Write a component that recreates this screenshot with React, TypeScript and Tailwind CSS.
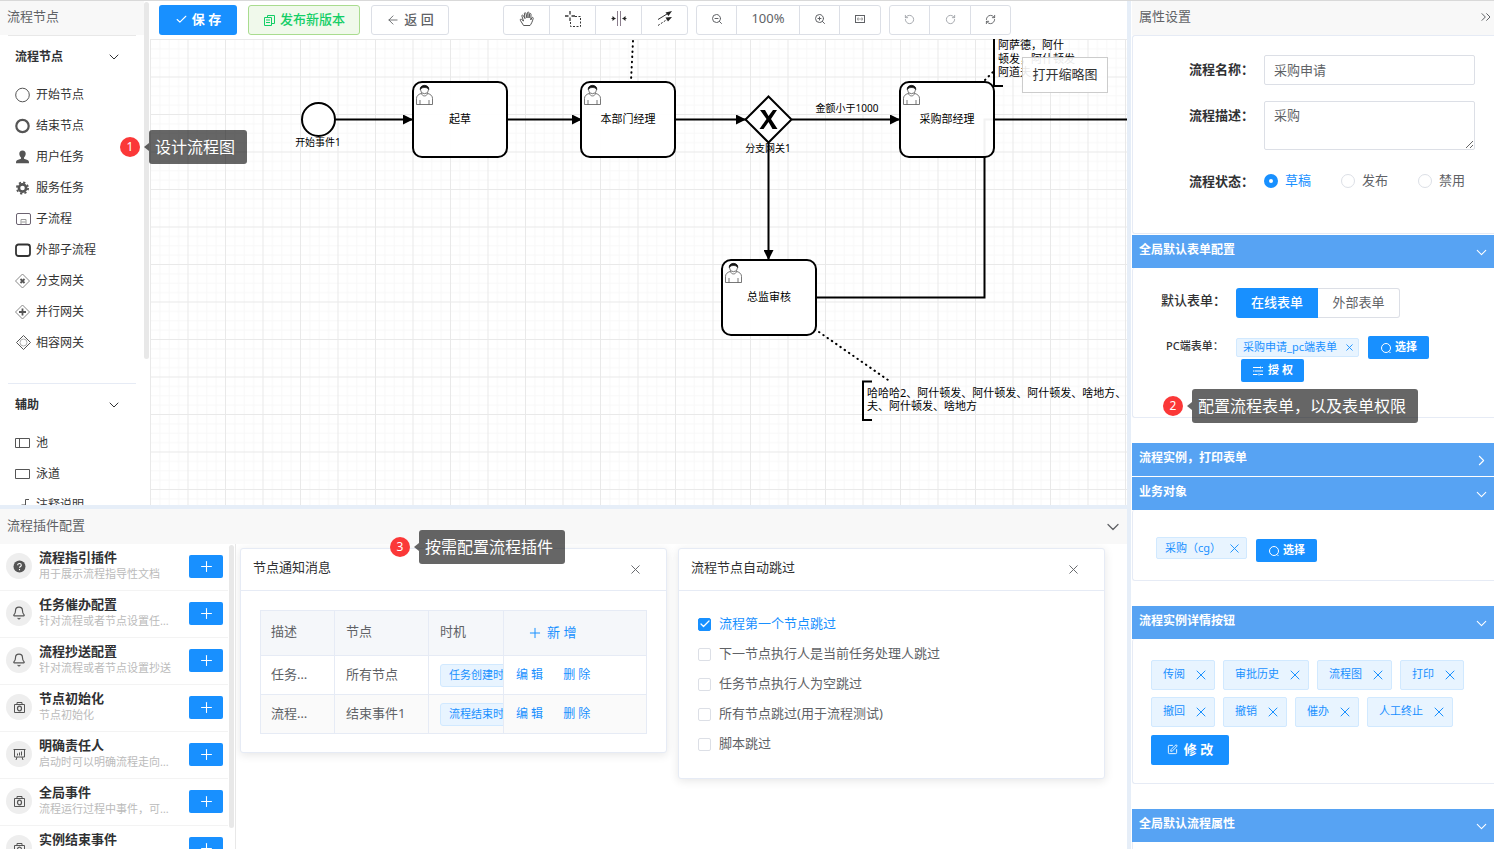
import React from 'react';
import { ArrowLeft, Bell, Check, ChevronDown, ChevronRight, ChevronsRight, Plus, RotateCcw, RotateCw, RefreshCw, X, ZoomIn, ZoomOut, SquarePen } from 'lucide-react';

/* ---------- icons ---------- */

const PaletteIcon = ({ name }: { name: string }) => (
  <svg width="16" height="16" viewBox="0 0 16 16" fill="none" stroke="#555" className="shrink-0">
    {name === 'start' && <circle cx="7.500" cy="8" r="6.800" />}
    {name === 'end' && <circle cx="7.500" cy="8" r="6.200" strokeWidth="2.200" />}
    {name === 'user' && (
      <path d="M7.500 1.500c-2.200 0-3.200 1.400-3.200 3.100 0 1.700.7 3.100 1.700 3.900v1.200L2.500 11C1.300 11.400 1 12.300 1 14.200h13c0-1.900-.3-2.800-1.500-3.200L9 9.700V8.500c1-.8 1.700-2.200 1.700-3.900 0-1.700-1-3.100-3.200-3.100z" fill="#555" stroke="none" />
    )}
    {name === 'service' && (
      <>
        <circle cx="7.500" cy="8" r="3.600" strokeWidth="2.600" />
        <circle cx="7.500" cy="8" r="5.600" strokeWidth="1.800" strokeDasharray="2.200 2.198" />
      </>
    )}
    {name === 'sub' && (
      <>
        <rect x="1.500" y="2.500" width="14" height="11" rx="1.500" stroke="#6b6270" />
        <path d="M6 13V8.500h5V13M6.500 11h4" stroke="#999" />
      </>
    )}
    {name === 'call' && <rect x="1" y="2.500" width="14" height="11.500" rx="2.500" stroke="#333" strokeWidth="1.800" />}
    {name === 'exclusive' && <path d="M7.500 1l7 7-7 7-7-7z" stroke="#888" />}
    {name === 'exclusive' && <path d="M5.500 6l4 4M9.500 6l-4 4" strokeWidth="1.800" />}
    {name === 'parallel' && <path d="M7.500 1l7 7-7 7-7-7z" stroke="#888" />}
    {name === 'parallel' && <path d="M7.500 4.500v7M4 8h7" strokeWidth="1.800" />}
    {name === 'inclusive' && (
      <>
        <path d="M8.500 .5l7 7-7 7-7-7z" stroke="#555" />
        <circle cx="8.500" cy="7.500" r="3.500" stroke="#999" strokeWidth=".8" />
      </>
    )}
    {name === 'pool' && <path d="M.5 3.500h14v9H.5zM4.500 3.500v9" />}
    {name === 'lane' && <path d="M.5 3.500h14v9H.5z" />}
    {name === 'note' && <path d="M14 2.500h-3.500v10H14M5 9.500l1.500-1.500h4M5.500 13l1-1.500" />}
  </svg>
);

const HandIcon = () => (
  <svg width="16" height="16" viewBox="0 0 16 16" fill="none" stroke="#444" strokeLinecap="round" strokeLinejoin="round">
    <path d="M5 14.500h6c1.200-1.500 2.300-3.600 3.200-7 .3-1.200-1-1.500-1.400-.6l-1 2 .2-5.600c0-1-1.300-1.100-1.500-.1L10 7V1.800c0-1-1.500-1-1.600 0L8 7 6.900 2.300c-.3-1-1.600-.7-1.500.3L6 7.600 4.300 4.500c-.5-.9-1.700-.3-1.400.6L4.500 10 2.400 8.300c-.8-.5-1.700.3-1.100 1.100z" strokeWidth=".9" />
  </svg>
);

const LassoIcon = () => (
  <svg width="18" height="18" viewBox="0 0 18 18" fill="none" stroke="#333">
    <path d="M6 1v10M1 6h10" strokeWidth="1.300" />
    <rect x="4.500" y="4.500" width="3" height="3" fill="#fff" stroke="none" />
    <path d="M11 6.500h5.500v10H6.500V11" strokeDasharray="2 1.500" />
  </svg>
);

const SpaceIcon = () => (
  <svg width="18" height="18" viewBox="0 0 18 18" fill="none" stroke="#333">
    <path d="M7.500 1v15M10.500 1v15" stroke="#8a7d8c" />
    <path d="M1.500 8.500h4M12.500 8.500h4" />
    <path d="M2.500 6L5.500 8.500l-3 2.500zM15.500 6l-3 2.500 3 2.500z" fill="#222" stroke="none" />
  </svg>
);

const ConnectIcon = () => (
  <svg width="18" height="18" viewBox="0 0 18 18" fill="none" stroke="#333">
    <path d="M2 9.500L11 4" />
    <path d="M16 1l-3.500 5-3-3.500zM16 7l-4 4.500-2.500-4z" fill="#222" stroke="none" />
    <path d="M2 15.500L11 9.500" strokeDasharray="2 1.500" />
  </svg>
);

const FitIcon = () => (
  <svg width="12" height="12" viewBox="0 0 12 12" fill="none" stroke="#606266">
    <rect x="1.500" y="2.500" width="9" height="7" />
    <path d="M3.500 5h1.500v2H3.500zM7 5h1.500v2H7z" stroke="#aaa" />
  </svg>
);

const CopyIcon = () => (
  <svg width="13" height="13" viewBox="0 0 13 13" fill="none" stroke="currentColor">
    <path d="M4.500 3V1.500h7v8H9M1.500 3.500h7v8h-7zM3 6h4M3 8.500h4" />
  </svg>
);

const SearchIcon = () => (
  <svg width="12" height="12" viewBox="0 0 12 12" fill="none" stroke="currentColor">
    <circle cx="6" cy="6" r="4.500" />
    <path d="M9 9.500l1.500 1.500" />
  </svg>
);

const SetUpIcon = () => (
  <svg width="12" height="12" viewBox="0 0 12 12" fill="none" stroke="currentColor">
    <path d="M1 2.500h7M9.500 2.500H11M1 6h1.500M5 6h6M1 9.500h4.500M8 9.500h3" />
    <path d="M8.500 1.500v2M4 5v2M7 8.500v2" />
  </svg>
);

const HelpIcon = () => (
  <svg width="13" height="13" viewBox="0 0 13 13">
    <circle cx="6.500" cy="6.500" r="6" fill="#555" />
    <path d="M4.700 5.200c0-2.300 3.600-2.200 3.600 0 0 1.300-1.800 1.200-1.800 2.600M6.500 9v1.200" fill="none" stroke="#fff" strokeWidth="1.100" />
  </svg>
);

const CameraIcon = () => (
  <svg width="13" height="13" viewBox="0 0 13 13" fill="none" stroke="currentColor">
    <path d="M1.500 3.500h10v8h-10zM4 3.500v-2h5v2" />
    <ellipse cx="6.500" cy="7.500" rx="2" ry="2.400" strokeWidth="1.200" />
  </svg>
);

const BoardIcon = () => (
  <svg width="13" height="13" viewBox="0 0 13 13" fill="none" stroke="currentColor">
    <path d="M.5 1.500h12M1.500 1.500v7.500h10V1.500M4 9l-1 3M9 9l1 3M4.500 5.500v2M6.500 4.500v3M8.500 3.500v4" />
  </svg>
);

const pluginIcons = {
  help: <HelpIcon />,
  bell: <Bell size={14} strokeWidth={2} />,
  camera: <CameraIcon />,
  board: <BoardIcon />,
};

/* ---------- data ---------- */

const flowNodes = [
  { icon: 'start', label: '开始节点' },
  { icon: 'end', label: '结束节点' },
  { icon: 'user', label: '用户任务' },
  { icon: 'service', label: '服务任务' },
  { icon: 'sub', label: '子流程' },
  { icon: 'call', label: '外部子流程' },
  { icon: 'exclusive', label: '分支网关' },
  { icon: 'parallel', label: '并行网关' },
  { icon: 'inclusive', label: '相容网关' },
];

const auxNodes = [
  { icon: 'pool', label: '池' },
  { icon: 'lane', label: '泳道' },
  { icon: 'note', label: '注释说明' },
];

const plugins: { icon: keyof typeof pluginIcons; title: string; desc: string }[] = [
  { icon: 'help', title: '流程指引插件', desc: '用于展示流程指导性文档' },
  { icon: 'bell', title: '任务催办配置', desc: '针对流程或者节点设置任务催办' },
  { icon: 'bell', title: '流程抄送配置', desc: '针对流程或者节点设置抄送' },
  { icon: 'camera', title: '节点初始化', desc: '节点初始化' },
  { icon: 'board', title: '明确责任人', desc: '启动时可以明确流程走向和责任人' },
  { icon: 'camera', title: '全局事件', desc: '流程运行过程中事件，可以自定义' },
  { icon: 'camera', title: '实例结束事件', desc: '流程实例结束时触发' },
];

const notices = [
  { desc: '任务创建提醒', node: '所有节点', time: '任务创建时' },
  { desc: '流程结束提醒', node: '结束事件1', time: '流程结束时' },
];

const skipOptions = ['流程第一个节点跳过', '下一节点执行人是当前任务处理人跳过', '任务节点执行人为空跳过', '所有节点跳过(用于流程测试)', '脚本跳过'];

const detailButtons = ['传阅', '审批历史', '流程图', '打印', '撤回', '撤销', '催办', '人工终止'];

/* ---------- shared ---------- */

const Callout = ({ no, text, className }: { no: number; text: string; className: string }) => (
  <div className={`absolute z-20 flex items-center whitespace-nowrap ${className}`}>
    <span className="flex h-5 w-5 items-center justify-center rounded-full bg-[#fb3838] text-xs text-white">{no}</span>
    <span className="ml-1 h-0 w-0 border-y-4 border-r-5 border-y-transparent border-r-black/60" />
    <span className="flex h-[34px] items-center rounded-[3px] bg-black/60 pr-3 pl-1.5 text-base text-white">{text}</span>
  </div>
);

const PaletteSection = ({ title, items }: { title: string; items: { icon: string; label: string }[] }) => (
  <section>
    <button className="flex h-[43px] w-full items-center justify-between pr-7 pb-px pl-[15px] text-xs font-bold text-[#303133]">
      {title}
      <ChevronDown size={16} strokeWidth={1.5} />
    </button>
    <ul>
      {items.map((item) => (
        <li key={item.label} className="flex h-[31px] items-center gap-[5px] pl-[15px] text-xs text-[#333]">
          <PaletteIcon name={item.icon} />
          {item.label}
        </li>
      ))}
    </ul>
  </section>
);

const Palette = () => (
  <aside className="relative w-[150px] shrink-0 bg-white">
    <div className="flex h-full flex-col overflow-hidden">
      <h2 className="mr-1.5 flex h-[34px] shrink-0 items-center bg-[#f8f8f8] pb-0.5 pl-[7px] text-[13px] text-[#606266]">流程节点</h2>
      <div className="mr-3.5 ml-2 border-t border-[#e8e8e8]" />
      <PaletteSection title="流程节点" items={flowNodes} />
      <div className="mt-[25px] mr-3.5 ml-2 border-t border-[#e6ebf5]" />
      <PaletteSection title="辅助" items={auxNodes} />
    </div>
    <div className="absolute top-px right-px h-[357px] w-[5px] rounded-full bg-[#e8e8e8]" />
    <Callout no={1} text="设计流程图" className="top-[129px] left-[120px]" />
  </aside>
);

const ToolButton = ({ label, className, children }: { label: string; className: string; children: React.ReactNode }) => (
  <button aria-label={label} className={`-ml-px flex h-[30px] items-center justify-center border border-[#dcdfe6] bg-white pb-0.5 first:ml-0 first:rounded-l-[3px] last:rounded-r-[3px] ${className}`}>
    {children}
  </button>
);

const Toolbar = () => (
  <div className="flex h-[38px] shrink-0 items-center gap-[11px] overflow-hidden pl-[9px]">
    <button className="flex h-[30px] w-[78px] shrink-0 items-center justify-center gap-1 rounded-[3px] bg-[#1890ff] pb-px text-[13px] font-bold text-white">
      <Check size={13} strokeWidth={2} />保 存
    </button>
    <button className="flex h-[30px] w-28 shrink-0 items-center justify-center gap-1 rounded-[3px] border border-[#a9dc8f] bg-[#f0f9eb] text-[13px] font-medium text-[#13ce66]">
      <CopyIcon />发布新版本
    </button>
    <button className="flex h-[30px] w-[78px] shrink-0 items-center justify-center gap-1 rounded-[3px] border border-[#dcdfe6] bg-white text-[13px] font-medium text-[#606266]">
      <ArrowLeft size={14} strokeWidth={1.5} />返 回
    </button>
    <div className="ml-[43px] flex shrink-0 gap-2">
      <div className="flex">
        <ToolButton label="抓手工具" className="w-[47px]"><HandIcon /></ToolButton>
        <ToolButton label="套索工具" className="w-[47px]"><LassoIcon /></ToolButton>
        <ToolButton label="间距工具" className="w-[47px]"><SpaceIcon /></ToolButton>
        <ToolButton label="连接工具" className="w-[47px]"><ConnectIcon /></ToolButton>
      </div>
      <div className="flex text-[#606266]">
        <ToolButton label="缩小" className="w-[41px]"><ZoomOut size={12} strokeWidth={2} /></ToolButton>
        <ToolButton label="缩放比例" className="w-16 text-[13px]">100%</ToolButton>
        <ToolButton label="放大" className="w-[41px]"><ZoomIn size={12} strokeWidth={2} /></ToolButton>
        <ToolButton label="适应画布" className="w-[42px]"><FitIcon /></ToolButton>
      </div>
      <div className="flex text-[#606266]">
        <ToolButton label="撤销" className="w-[41px] text-[#a0a3a9]"><RotateCcw size={11} strokeWidth={2} /></ToolButton>
        <ToolButton label="重做" className="w-[42px] text-[#a0a3a9]"><RotateCw size={11} strokeWidth={2} /></ToolButton>
        <ToolButton label="刷新" className="w-[41px]"><RefreshCw size={11} strokeWidth={2} /></ToolButton>
      </div>
    </div>
  </div>
);

/* ---------- diagram ---------- */

const TaskNode = ({ x, y, name }: { x: number; y: number; name: string }) => (
  <g transform={`translate(${x} ${y})`}>
    <rect width="94" height="75" rx="9" fill="#fff" fillOpacity=".95" stroke="#000" strokeWidth="2" />
    <g fill="#fff" stroke="#555" strokeWidth=".8">
      <path d="M3.500 22.500v-6c0-2.500 1.500-4 5-5.200h6c3.500 1.200 5 2.700 5 5.200v6zM7 22.500v-4.500M16 22.500v-4.500" />
      <path d="M8.500 11.300c.5 3.500 5.500 3.500 6 0" />
      <circle cx="11.500" cy="7.700" r="4" />
      <path d="M7.300 7.500c-.8-5.500 9.200-5.500 8.400 0-1-2-2.500-1.800-4.200-2-1.500.2-3.200 0-4.200 2z" fill="#111" stroke="#111" />
    </g>
    <text x="47" y="41" textAnchor="middle" fontSize="11">{name}</text>
  </g>
);

const Canvas = () => (
  <div className="relative min-h-0 flex-1 overflow-hidden">
    <svg className="absolute inset-0 h-full w-full">
      <defs>
        <pattern id="grid" width="37.500" height="37.500" patternUnits="userSpaceOnUse">
          <path d="M9.875 0v37.500M19.250 0v37.500M28.625 0v37.500M0 9.875h37.500M0 19.250h37.500M0 28.625h37.500" stroke="#f8f8f8" />
          <path d="M.5 0v37.500M0 .5h37.500" stroke="#e9e9e9" />
        </pattern>
        <marker id="arrow" viewBox="0 0 10 10" refX="10" refY="5" markerWidth="10" markerHeight="10" markerUnits="userSpaceOnUse" orient="auto">
          <path d="M0 0l10 5-10 5z" />
        </marker>
      </defs>
      <rect width="100%" height="100%" fill="url(#grid)" />
      <g transform="translate(-150 -39)">
        <g fill="none" stroke="#000" strokeWidth="2">
          <path d="M336 119.500H413" markerEnd="url(#arrow)" />
          <path d="M507 119.500H582" markerEnd="url(#arrow)" />
          <path d="M676 119.500H746" markerEnd="url(#arrow)" />
          <path d="M792 119.500H900" markerEnd="url(#arrow)" />
          <path d="M768.500 143V260" markerEnd="url(#arrow)" />
          <path d="M816 297.500H984.500V119.500H2000" />
          <path d="M633 41L631 81M819 332L888 380M985 80L994 71" strokeDasharray="0.500 4.700" strokeLinecap="round" />
          <path d="M1003 86H994V20M872 381.500H863V420H872" />
          <circle cx="318.500" cy="119.500" r="16.500" fill="#fff" />
          <path d="M768.500 96.500l23 23-23 23-23-23z" fill="#fff" />
        </g>
        <path d="M760 110h5l3.500 6 4.500-6h4l-6 9 6.500 10h-5l-4-7-5 7h-4l7-10z" />
        <TaskNode x={413} y={82} name="起草" />
        <TaskNode x={581} y={82} name="本部门经理" />
        <TaskNode x={900} y={82} name="采购部经理" />
        <TaskNode x={722} y={260} name="总监审核" />
        <g fontSize="10">
          <text x="318" y="146" textAnchor="middle">开始事件1</text>
          <text x="768" y="152" textAnchor="middle">分支网关1</text>
          <text x="847" y="112" textAnchor="middle">金额小于1000</text>
        </g>
        <g fontSize="11">
          <text x="998" y="49">阿萨德，阿什</text>
          <text x="998" y="63">顿发，阿什顿发</text>
          <text x="998" y="76">阿道夫</text>
          <text x="867" y="397">哈哈哈2、阿什顿发、阿什顿发、阿什顿发、啥地方、</text>
          <text x="867" y="410">夫、阿什顿发、啥地方</text>
        </g>
      </g>
    </svg>
    <button className="absolute top-[18px] right-[19px] h-9 w-[86px] border border-[#ccc] bg-white/90 text-[13px] text-[#333]">打开缩略图</button>
  </div>
);

/* ---------- plugin panel ---------- */

const PluginCard = ({ title, children }: { title: string; children: React.ReactNode }) => (
  <div className="w-[427px] shrink-0 rounded-[3px] border border-[#e6ebf5] bg-white shadow-[0_2px_10px_rgba(0,0,0,0.1)]">
    <div className="flex h-[42px] items-center justify-between border-b border-[#e6ebf5] pr-[23px] pl-3">
      <h3 className="pb-1 text-[13px] text-[#303133]">{title}</h3>
      <button aria-label="关闭" className="text-[#606266]"><X size={15} strokeWidth={1.5} /></button>
    </div>
    {children}
  </div>
);

const NoticeTable = () => (
  <div className="px-[19px] pt-[19px] pb-[18px]">
    <table className="w-full table-fixed border-collapse border border-[#e6ebf5] text-left text-[13px] text-[#606266]">
      <colgroup>
        <col className="w-[74px]" />
        <col className="w-[94px]" />
        <col className="w-[75px]" />
        <col />
      </colgroup>
      <thead>
        <tr className="h-[45px] bg-[#f5f7fa]">
          <th className="border-r border-[#e6ebf5] pb-0.5 pl-2.5 font-normal">描述</th>
          <th className="border-r border-[#e6ebf5] pb-0.5 pl-[11px] font-normal">节点</th>
          <th className="border-r border-[#e6ebf5] pb-0.5 pl-[11px] font-normal">时机</th>
          <th className="pl-[23px] font-normal">
            <button className="flex items-center gap-1 text-[#1890ff]"><Plus size={16} strokeWidth={1.5} />新 增</button>
          </th>
        </tr>
      </thead>
      <tbody>
        {notices.map((row) => (
          <tr key={row.time} className="h-[39px] border-t border-[#e6ebf5] even:bg-[#fafafa]">
            <td className="border-r border-[#e6ebf5] pl-2.5">
              <div className="w-10 truncate">{row.desc}</div>
            </td>
            <td className="border-r border-[#e6ebf5] pl-[11px]">{row.node}</td>
            <td className="overflow-hidden border-r border-[#e6ebf5] pl-[11px]">
              <span className="flex h-[23px] w-[75px] items-center rounded-[3px] border border-[#d1e9ff] bg-[#e8f4ff] pl-2 text-[11px] whitespace-nowrap text-[#1890ff]">{row.time}</span>
            </td>
            <td className="pl-3 text-xs text-[#1890ff]">
              <button>编 辑</button>
              <button className="ml-5">删 除</button>
            </td>
          </tr>
        ))}
      </tbody>
    </table>
  </div>
);

const PluginPanel = () => (
  <section className="relative flex h-[340px] shrink-0 flex-col">
    <div className="flex h-[35px] shrink-0 items-center justify-between bg-[#f8f8f8] pr-1 pl-[7px] text-[13px] text-[#606266]">
      <h2 className="pb-0.5">流程插件配置</h2>
      <button aria-label="收起"><ChevronDown size={20} strokeWidth={1.5} /></button>
    </div>
    <div className="flex min-h-0 flex-1">
      <div className="relative w-[236px] shrink-0 overflow-hidden border-r border-[#e8e8e8]">
        <ul className="mr-[7px]">
          {plugins.map((p) => (
            <li key={p.title} className="flex h-[47px] items-center border-b border-[#f3f3f3] pr-[5px] pb-0.5 pl-1.5">
              <span className="flex h-[26px] w-[26px] shrink-0 items-center justify-center rounded-full bg-[#eee] text-[#555]">{pluginIcons[p.icon]}</span>
              <div className="ml-[7px] min-w-0 flex-1 pr-3.5 pb-0.5">
                <h4 className="text-[13px] leading-[18px] font-bold text-[#303133]">{p.title}</h4>
                <p className="truncate text-[11px] leading-4 text-[#bbb]">{p.desc}</p>
              </div>
              <button aria-label={`添加${p.title}`} className="flex h-[23px] w-[34px] shrink-0 items-center justify-center rounded-[2px] bg-[#1890ff] text-white">
                <Plus size={17} strokeWidth={1.5} />
              </button>
            </li>
          ))}
        </ul>
        <div className="absolute top-px right-px h-[283px] w-[5px] rounded-full bg-[#e8e8e8]" />
      </div>
      <div className="flex min-w-0 flex-1 items-start gap-[11px] overflow-hidden pt-1 pl-1">
        <PluginCard title="节点通知消息">
          <NoticeTable />
        </PluginCard>
        <PluginCard title="流程节点自动跳过">
          <div className="flex flex-col pt-[18px] pb-[19px] pl-[19px]">
            {skipOptions.map((label, i) => (
              <label key={label} className={`flex h-[30px] items-center gap-2 text-[13px] ${i === 0 ? 'text-[#1890ff]' : 'text-[#606266]'}`}>
                <span className="relative flex h-[13px] w-[13px] items-center justify-center">
                  <input type="checkbox" defaultChecked={i === 0} className="peer absolute inset-0 m-0 h-[13px] w-[13px] appearance-none rounded-[2px] border border-[#dcdfe6] bg-white checked:border-[#1890ff] checked:bg-[#1890ff]" />
                  <Check size={12} strokeWidth={2.5} className="pointer-events-none relative hidden text-white peer-checked:block" />
                </span>
                {label}
              </label>
            ))}
          </div>
        </PluginCard>
      </div>
    </div>
    <Callout no={3} text="按需配置流程插件" className="top-[21px] left-[390px]" />
  </section>
);

/* ---------- property panel ---------- */

const SectionBar = ({ title, open = true }: { title: string; open?: boolean }) => (
  <button className="flex h-[33px] w-full shrink-0 items-center justify-between bg-[#57a3f3] pr-1 pb-[3px] pl-[7px] text-xs font-bold text-white">
    {title}
    {open ? <ChevronDown size={17} strokeWidth={1.5} className="mt-1" /> : <ChevronRight size={17} strokeWidth={1.5} className="mt-1" />}
  </button>
);

const SelectButton = () => (
  <button className="flex h-[23px] w-[61px] items-center justify-center gap-[3px] rounded-[2px] bg-[#1890ff] text-[11px] font-bold text-white">
    <SearchIcon />选择
  </button>
);

const PropertyPanel = () => (
  <aside className="relative flex w-[363px] shrink-0 flex-col overflow-hidden bg-white pl-px">
    <div className="flex h-[34px] shrink-0 items-center justify-between bg-[#f8f8f8] pb-0.5 pl-[7px] text-[13px] text-[#606266]">
      <h2>属性设置</h2>
      <button aria-label="收起面板"><ChevronsRight size={16} strokeWidth={1.5} /></button>
    </div>

    <div className="h-[199px] shrink-0 rounded-l-[3px] border-y border-l border-[#e6ebf5] pt-[19px] pr-[19px] text-[13px] text-[#606266]">
      <div className="flex">
        <label htmlFor="flow-name" className="w-[131px] shrink-0 pl-14 leading-7 font-bold text-[#303133]">流程名称：</label>
        <input id="flow-name" defaultValue="采购申请" className="h-[30px] min-w-0 flex-1 rounded-[2px] border border-[#dcdfe6] px-[9px] pb-0.5 outline-none" />
      </div>
      <div className="mt-4 flex">
        <label htmlFor="flow-desc" className="w-[131px] shrink-0 pl-14 leading-7 font-bold text-[#303133]">流程描述：</label>
        <textarea id="flow-desc" defaultValue="采购" className="h-[49px] min-w-0 flex-1 resize rounded-[2px] border border-[#dcdfe6] px-[9px] py-[3px] leading-5 outline-none" />
      </div>
      <div className="mt-4 flex items-center">
        <span className="w-[131px] shrink-0 pl-14 leading-[30px] font-bold text-[#303133]">流程状态：</span>
        {['草稿', '发布', '禁用'].map((label, i) => (
          <label key={label} className={`mr-[30px] flex items-center gap-[7px] whitespace-nowrap last:mr-0 ${i === 0 ? 'text-[#1890ff]' : ''}`}>
            <input type="radio" name="status" defaultChecked={i === 0} className="h-[14px] w-[14px] appearance-none rounded-full border border-[#dcdfe6] bg-white checked:border-[5px] checked:border-[#1890ff]" />
            {label}
          </label>
        ))}
      </div>
    </div>

    <div className="mt-px shrink-0">
      <SectionBar title="全局默认表单配置" />
    </div>
    <div className="relative h-[150px] shrink-0 rounded-l-[3px] border-b border-l border-[#e6ebf5] pt-5 text-[#606266]">
      <div className="flex items-center text-[13px]">
        <span className="w-[103px] shrink-0 pb-1 pl-7 font-medium text-[#303133]">默认表单：</span>
        <button className="h-[30px] w-[82px] rounded-l-[3px] bg-[#1890ff] font-medium text-white">在线表单</button>
        <button className="h-[30px] w-[82px] rounded-r-[3px] border border-l-0 border-[#dcdfe6]">外部表单</button>
      </div>
      <div className="mt-[18px] flex items-center text-[11px]">
        <span className="w-[103px] shrink-0 pb-0.5 pl-[33px] font-medium text-[#303133]">PC端表单：</span>
        <span className="flex h-[19px] w-[123px] items-center justify-between rounded-[2px] border border-[#d1e9ff] bg-[#e8f4ff] pr-[3px] pl-1.5 whitespace-nowrap text-[#1890ff]">
          采购申请_pc端表单
          <button aria-label="移除表单"><X size={11} strokeWidth={2} /></button>
        </span>
        <div className="ml-[9px]"><SelectButton /></div>
      </div>
      <button className="ml-[108px] flex h-[23px] w-[63px] items-center justify-center gap-1 rounded-[2px] bg-[#1890ff] text-[11px] font-bold text-white">
        <SetUpIcon />授 权
      </button>
      <Callout no={2} text="配置流程表单，以及表单权限" className="top-[121px] left-[30px]" />
    </div>

    <div className="mt-[25px] flex shrink-0 flex-col gap-px">
      <SectionBar title="流程实例，打印表单" open={false} />
      <SectionBar title="业务对象" />
    </div>
    <div className="flex h-[71px] shrink-0 items-start rounded-l-[3px] border-b border-l border-[#e6ebf5] pt-[27px] pl-[23px]">
      <span className="flex h-[22px] w-[91px] items-center justify-between rounded-[2px] border border-[#d1e9ff] bg-[#e8f4ff] pr-1 pl-2 text-[11px] text-[#1890ff]">
        采购（cg）
        <button aria-label="移除业务对象"><X size={15} strokeWidth={1.5} /></button>
      </span>
      <div className="mt-0.5 ml-[9px]"><SelectButton /></div>
    </div>

    <div className="mt-[25px] shrink-0">
      <SectionBar title="流程实例详情按钮" />
    </div>
    <div className="h-[145px] shrink-0 rounded-l-[3px] border-b border-l border-[#e6ebf5] pt-[21px] pr-[18px] pl-[18px]">
      <div className="flex flex-wrap gap-x-2 gap-y-[7px]">
        {detailButtons.map((label) => (
          <span key={label} className="flex h-[30px] items-center gap-2 rounded-[2px] border border-[#d1e9ff] bg-[#e8f4ff] pr-[5px] pb-px pl-[11px] text-[11px] text-[#1890ff]">
            {label}
            <button aria-label={`移除${label}`}><X size={16} strokeWidth={1.5} /></button>
          </span>
        ))}
      </div>
      <button className="mt-2 flex h-[30px] w-[78px] items-center justify-center gap-1.5 rounded-[2px] bg-[#1890ff] pb-px text-[13px] font-bold text-white">
        <SquarePen size={11} strokeWidth={2} />修 改
      </button>
    </div>

    <div className="mt-[25px] shrink-0">
      <SectionBar title="全局默认流程属性" />
    </div>
    <div className="min-h-2 flex-1 border-l border-[#e6ebf5]" />
  </aside>
);

const App = () => {
  return (
    <div className="flex h-screen overflow-hidden border-t border-[#d9d9d9] bg-white font-['Noto_Sans','Noto_Sans_CJK_SC',sans-serif]">
      <main className="flex min-w-0 flex-1 flex-col">
        <div className="flex min-h-0 flex-1">
          <Palette />
          <div className="flex min-w-0 flex-1 flex-col">
            <Toolbar />
            <Canvas />
          </div>
        </div>
        <div className="h-1 shrink-0 bg-[#e6eef8]" />
        <PluginPanel />
      </main>
      <div className="w-1 shrink-0 bg-[#e6eef8]" />
      <PropertyPanel />
    </div>
  );
};

export default App;
